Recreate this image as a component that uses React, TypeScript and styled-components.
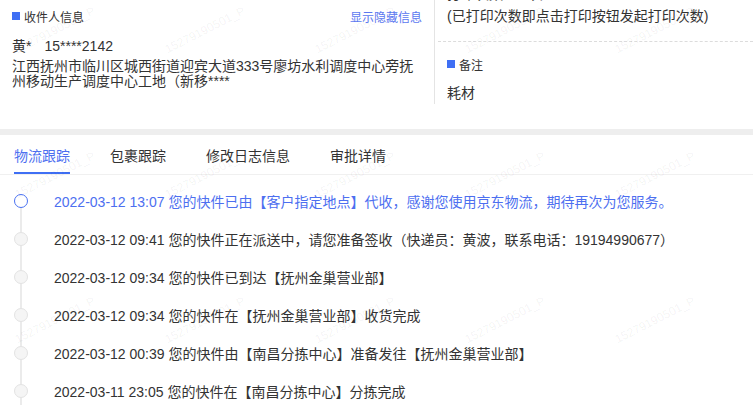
import React from "react";
import styled, { createGlobalStyle, css } from "styled-components";

const GlobalStyle = createGlobalStyle`
  html, body { margin: 0; padding: 0; background: #fff; }
  body {
    font-family: "Liberation Sans", Arial, "Noto Sans CJK SC", sans-serif;
    color: #333;
  }
  * { box-sizing: border-box; }
`;

const Page = styled.div`
  position: relative;
  width: 753px;
  height: 405px;
  overflow: hidden;
  background: #fff;
`;

const TopSection = styled.div`
  display: flex;
  height: 129px;
`;

const LeftCol = styled.div`
  width: 434px;
  padding: 8px 12px 0 12px;
`;

const RightCol = styled.div`
  flex: 1;
  height: 104px;
  border-left: 1px solid #e4e4e4;
  padding-left: 3px;
  overflow: hidden;
`;

const SectionHeader = styled.div<{ $mt?: number }>`
  display: flex;
  align-items: center;
  justify-content: space-between;
  height: 16px;
  font-size: 12px;
  margin-top: ${(p) => p.$mt ?? 0}px;
`;

const HeaderTitle = styled.div`
  display: flex;
  align-items: center;
  gap: 4px;
  color: #333;
`;

const Marker = styled.span`
  display: inline-block;
  width: 8px;
  height: 8px;
  background: #3f6ff4;
`;

const LinkText = styled.span`
  color: #5b78f0;
  font-size: 12px;
  cursor: pointer;
`;

const NameLine = styled.div`
  margin-top: 12px;
  font-size: 14px;
  line-height: 20px;
`;

const Phone = styled.span`
  margin-left: 13px;
`;

const Address = styled.div`
  margin-top: 3px;
  font-size: 14px;
  line-height: 15px;
`;

const RightBlock = styled.div`
  padding-left: 9px;
`;

const PrintInfo = styled.div`
  margin-top: -17px;
  font-size: 14px;
  line-height: 22px;
  white-space: nowrap;
`;

const DashedDivider = styled.div`
  margin-top: 14px;
  border-top: 1px dashed #dcdcdc;
`;

const PlainText = styled.div`
  margin-top: 11px;
  font-size: 14px;
  line-height: 20px;
`;

const Band = styled.div`
  height: 6px;
  background: #eeeeee;
`;

const TabBar = styled.div`
  display: flex;
  gap: 40px;
  padding: 0 14px;
  border-bottom: 1px solid #f0f0f0;
`;

const Tab = styled.div<{ $active?: boolean }>`
  height: 39px;
  padding-top: 3px;
  display: flex;
  align-items: center;
  font-size: 14px;
  border-bottom: 2px solid ${(p) => (p.$active ? "#3f6ff4" : "transparent")};
  color: ${(p) => (p.$active ? "#4d6ff0" : "#333")};
`;

const Timeline = styled.div`
  padding-top: 7px;
`;

const Item = styled.div`
  display: flex;
  align-items: stretch;
  height: 38px;
`;

const Rail = styled.div<{ $first?: boolean }>`
  position: relative;
  width: 14px;
  margin-left: 14px;
  margin-right: 26px;
  display: flex;
  align-items: center;
  justify-content: center;
  &::before {
    content: "";
    position: absolute;
    left: 6px;
    width: 2px;
    top: ${(p) => (p.$first ? "50%" : "0")};
    bottom: 0;
    background: #ebebeb;
  }
`;

const Dot = styled.span<{ $active?: boolean }>`
  position: relative;
  z-index: 1;
  width: 14px;
  height: 14px;
  border-radius: 50%;
  ${(p) =>
    p.$active
      ? css`
          border: 1.5px solid #4a72f2;
          background: #fff;
        `
      : css`
          border: 1.5px solid #e3e3e3;
          background: #f5f5f5;
        `}
`;

const ItemText = styled.div<{ $active?: boolean }>`
  display: flex;
  align-items: center;
  font-size: 14px;
  white-space: nowrap;
  color: ${(p) => (p.$active ? "#4d6ff0" : "#333")};
`;

const Watermark = styled.div`
  position: absolute;
  left: -20px;
  top: -43px;
  display: grid;
  grid-template-columns: repeat(5, 150px);
  grid-auto-rows: 145px;
  pointer-events: none;
  z-index: 5;
`;

const WatermarkCell = styled.div`
  display: flex;
  align-items: center;
  justify-content: center;
  span {
    transform: rotate(-27deg);
    font-size: 12px;
    color: rgba(0, 0, 0, 0.06);
    white-space: nowrap;
  }
`;

const events = [
  "2022-03-12 13:07 您的快件已由【客户指定地点】代收，感谢您使用京东物流，期待再次为您服务。",
  "2022-03-12 09:41 您的快件正在派送中，请您准备签收（快递员：黄波，联系电话：19194990677）",
  "2022-03-12 09:34 您的快件已到达【抚州金巢营业部】",
  "2022-03-12 09:34 您的快件在【抚州金巢营业部】收货完成",
  "2022-03-12 00:39 您的快件由【南昌分拣中心】准备发往【抚州金巢营业部】",
  "2022-03-11 23:05 您的快件在【南昌分拣中心】分拣完成",
];

const tabs = ["物流跟踪", "包裹跟踪", "修改日志信息", "审批详情"];

export default function App() {
  return (
    <Page>
      <GlobalStyle />
      <TopSection>
        <LeftCol>
          <SectionHeader>
            <HeaderTitle>
              <Marker />
              收件人信息
            </HeaderTitle>
            <LinkText>显示隐藏信息</LinkText>
          </SectionHeader>
          <NameLine>
            黄*<Phone>15****2142</Phone>
          </NameLine>
          <Address>江西抚州市临川区城西街道迎宾大道333号廖坊水利调度中心旁抚州移动生产调度中心工地（新移****</Address>
        </LeftCol>
        <RightCol>
          <RightBlock>
            <PrintInfo>
              <div>打印次数：1 次</div>
              <div>(已打印次数即点击打印按钮发起打印次数)</div>
            </PrintInfo>
          </RightBlock>
          <DashedDivider />
          <RightBlock>
            <SectionHeader $mt={14}>
              <HeaderTitle>
                <Marker />
                备注
              </HeaderTitle>
            </SectionHeader>
            <PlainText>耗材</PlainText>
          </RightBlock>
        </RightCol>
      </TopSection>
      <Band />
      <TabBar>
        {tabs.map((t, i) => (
          <Tab key={t} $active={i === 0}>
            {t}
          </Tab>
        ))}
      </TabBar>
      <Timeline>
        {events.map((e, i) => (
          <Item key={i}>
            <Rail $first={i === 0}>
              <Dot $active={i === 0} />
            </Rail>
            <ItemText $active={i === 0}>{e}</ItemText>
          </Item>
        ))}
      </Timeline>
      <Watermark>
        {Array.from({ length: 20 }).map((_, i) => (
          <WatermarkCell key={i}>
            <span>15279190501_P</span>
          </WatermarkCell>
        ))}
      </Watermark>
    </Page>
  );
}
